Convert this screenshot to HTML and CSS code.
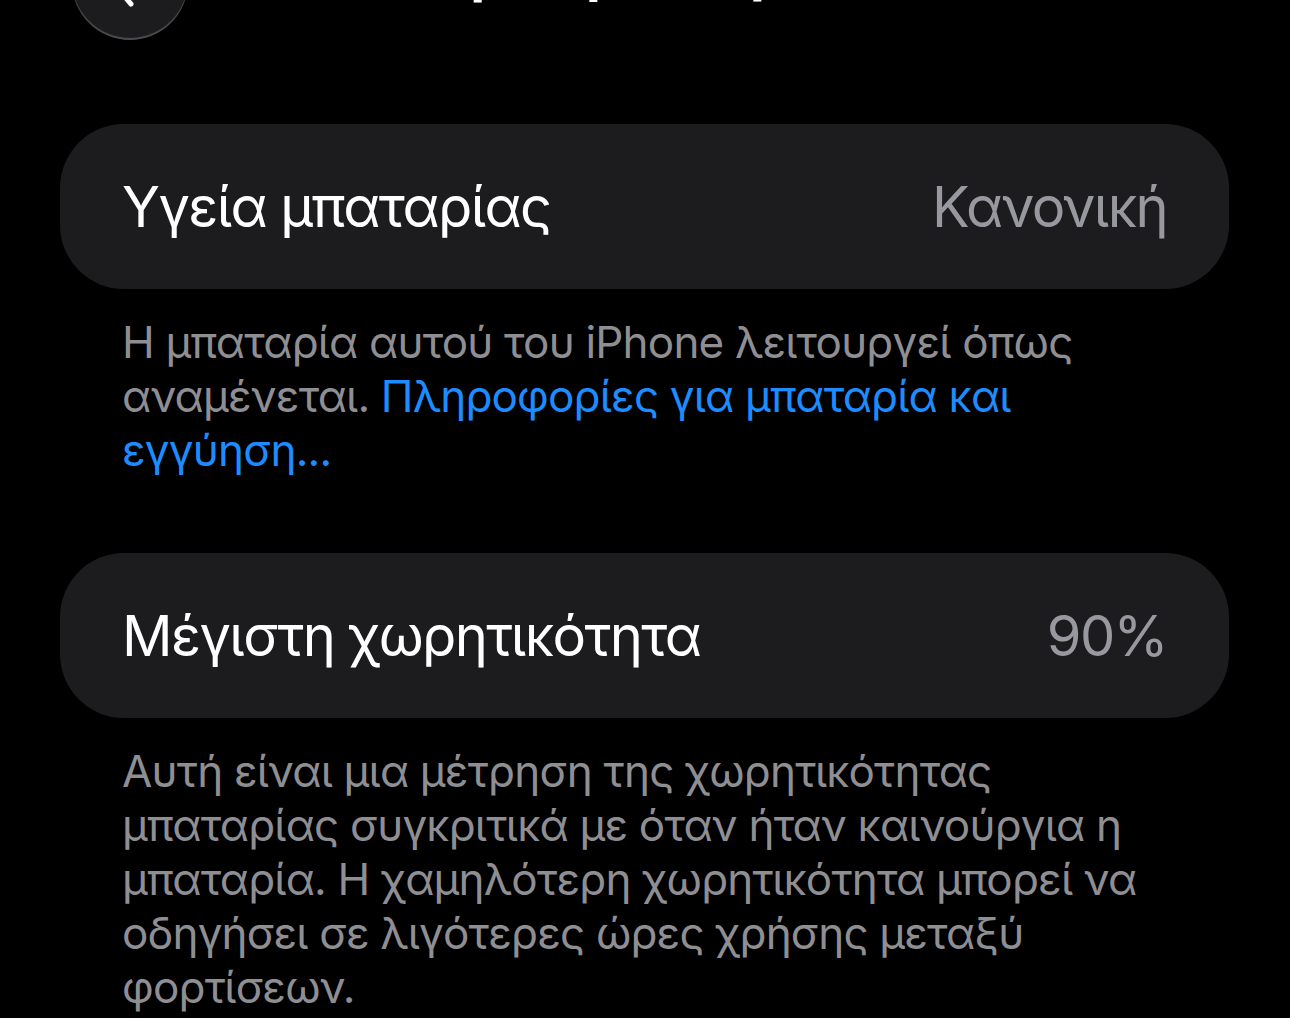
FILE: index.html
```html
<!DOCTYPE html>
<html lang="el">

<head>
    <meta charset="UTF-8">
    <meta name="viewport" content="width=device-width, initial-scale=1.0">
    <title>Υγεία μπαταρίας</title>
    <link rel="stylesheet" href="styles.css">
</head>

<body>
    <div class="screen">
        <div class="nav">
            <button class="back" aria-label="Πίσω">
                <svg viewBox="0 0 40 40" width="40" height="40">
                    <path d="M24 6 L12 20 L24 34" fill="none" stroke="#fff" stroke-width="5" stroke-linecap="round" stroke-linejoin="round" />
                </svg>
            </button>
            <div class="nav-title">Υγεία μπαταρίας</div>
        </div>

        <div class="row">
            <span class="label">Υγεία μπαταρίας</span>
            <span class="value">Κανονική</span>
        </div>
        <p class="note">Η μπαταρία αυτού του iPhone λειτουργεί όπως αναμένεται. <a href="#">Πληροφορίες για μπαταρία και εγγύηση...</a></p>

        <div class="row">
            <span class="label">Μέγιστη χωρητικότητα</span>
            <span class="value">90%</span>
        </div>
        <p class="note">Αυτή είναι μια μέτρηση της χωρητικότητας μπαταρίας συγκριτικά με όταν ήταν καινούργια η μπαταρία. Η χαμηλότερη χωρητικότητα μπορεί να οδηγήσει σε λιγότερες ώρες χρήσης μεταξύ φορτίσεων.</p>
    </div>
</body>

</html>
```

FILE: styles.css
```css
* {
    box-sizing: border-box;
}

html,
body {
    margin: 0;
    background: #000;
    overflow: hidden;
}

body {
    font-family: "Inter", "Noto Sans", sans-serif;
    color: #fff;
    -webkit-font-smoothing: antialiased;
}

.screen {
    padding: 0 61px 0 60px;
}

/* Top bar, mostly scrolled off */
.nav {
    display: flex;
    align-items: center;
    height: 116px;
    margin-top: -76px;
    margin-bottom: 84px;
}

.back {
    width: 116px;
    height: 116px;
    margin-left: 12px;
    border-radius: 50%;
    border: none;
    background: #1c1c1e;
    box-shadow: inset 0 -2px 1px rgba(255, 255, 255, 0.22);
    display: flex;
    align-items: flex-end;
    justify-content: center;
    padding: 0 6px 30px 0;
    flex-shrink: 0;
}

.nav-title {
    flex: 1;
    text-align: center;
    font-size: 54px;
    font-weight: 700;
    line-height: 1;
    letter-spacing: -1px;
    margin-right: 128px;
    margin-top: -20px;
}

/* Grouped rows */
.row {
    display: flex;
    justify-content: space-between;
    align-items: center;
    height: 165px;
    padding: 0 62px;
    background: #1c1c1e;
    border-radius: 64px;
    font-size: 56px;
    letter-spacing: -1.6px;
}

.value {
    color: #98989f;
}

.note {
    margin: 26px 0 76px;
    padding: 0 62px;
    font-size: 44px;
    line-height: 54px;
    letter-spacing: -0.8px;
    color: #8e8e93;
}

.note a {
    color: #1d8cff;
    text-decoration: none;
}
```
